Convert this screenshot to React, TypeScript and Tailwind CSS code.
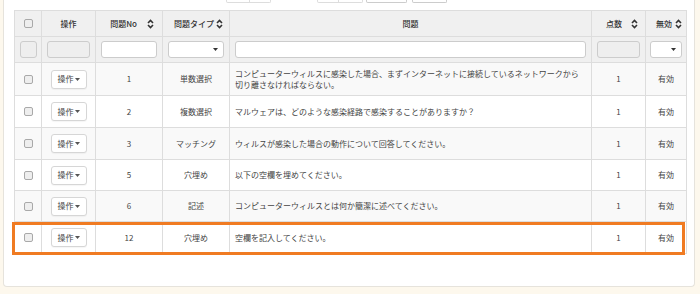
import React from "react";

const SortIcon = () => (
  <svg width="7" height="10" viewBox="0 0 7 10" className="inline-block shrink-0">
    <path d="M1 4 L3.5 1.5 L6 4" fill="none" stroke="#333" strokeWidth="1.6" />
    <path d="M1 6 L3.5 8.5 L6 6" fill="none" stroke="#333" strokeWidth="1.6" />
  </svg>
);

const Caret = () => (
  <svg width="5" height="3" viewBox="0 0 5 3" className="inline-block ml-[1px]">
    <path d="M0 0 L5 0 L2.5 3 Z" fill="#555" />
  </svg>
);

const Check = () => (
  <div className="mx-auto w-[9px] h-[9px] rounded-[2px] border border-[#a9a9a9] bg-[#eeeeee]" />
);

const OpBtn = () => (
  <div className="mx-auto flex items-center justify-center w-[36px] h-[19px] rounded-[3px] border border-[#d6d6d6] bg-white text-[8px] text-[#444] shadow-[0_1px_1px_rgba(0,0,0,0.04)]">
    操作
    <Caret />
  </div>
);

type Row = { no: string; type: string; text: string[]; h: string };

const rows: Row[] = [
  {
    no: "1",
    type: "単数選択",
    text: [
      "コンピューターウィルスに感染した場合、まずインターネットに接続しているネットワークから",
      "切り離さなければならない。",
    ],
    h: "h-[33px]",
  },
  { no: "2", type: "複数選択", text: ["マルウェアは、どのような感染経路で感染することがありますか？"], h: "h-[32px]" },
  { no: "3", type: "マッチング", text: ["ウィルスが感染した場合の動作について回答してください。"], h: "h-[32px]" },
  { no: "5", type: "穴埋め", text: ["以下の空欄を埋めてください。"], h: "h-[31px]" },
  { no: "6", type: "記述", text: ["コンピューターウィルスとは何か簡潔に述べてください。"], h: "h-[31px]" },
  { no: "12", type: "穴埋め", text: ["空欄を記入してください。"], h: "h-[32px]" },
];

const td = "border border-[#dddddd] p-0 align-middle";

export default function App() {
  return (
    <div
      className="w-[700px] h-[294px] bg-[#fdf8ed] overflow-hidden"
      style={{ fontFamily: '"Noto Sans CJK JP", "Noto Sans", sans-serif' }}
    >
      <div className="ml-[3px] mr-[5px] h-[287px] bg-white border-x border-b border-[#e6e3dc] rounded-b-[4px] px-[10px]">
        {/* partially visible toolbar buttons */}
        <div className="flex h-[3px] pl-[212px]">
          <div className="w-[24px] h-[3px] border-x border-b border-[#dddddd] rounded-bl-[2px]" />
          <div className="w-[21px] h-[3px] border-r border-b border-[#dddddd] rounded-br-[2px]" />
          <div className="w-[46px]" />
          <div className="w-[22px] h-[3px] border-x border-b border-[#dddddd] rounded-bl-[2px]" />
          <div className="w-[24px] h-[3px] border-r border-b border-[#dddddd] rounded-br-[2px]" />
          <div className="w-[3px]" />
          <div className="w-[41px] h-[3px] border-x border-b border-[#cccccc] rounded-b-[2px]" />
          <div className="w-[5px]" />
          <div className="w-[35px] h-[3px] border-x border-b border-[#cccccc] rounded-b-[2px]" />
        </div>
        <div className="relative mt-[7px]">
          <table className="w-[672px] border-collapse table-fixed text-[8px] text-[#444]">
            <colgroup>
              <col className="w-[27px]" />
              <col className="w-[54px]" />
              <col className="w-[67px]" />
              <col className="w-[67px]" />
              <col className="w-[362px]" />
              <col className="w-[54px]" />
              <col className="w-[41px]" />
            </colgroup>
            <thead>
              <tr className="h-[26px] bg-[#f0f0f0] text-[#333]">
                <th className={td + " font-medium"}>
                  <Check />
                </th>
                <th className={td + " font-medium"}>操作</th>
                <th className={td + " font-medium"}>
                  <div className="flex items-center justify-end pr-[8px] gap-[10px]">
                    <span>問題No</span>
                    <SortIcon />
                  </div>
                </th>
                <th className={td + " font-medium"}>
                  <div className="flex items-center justify-end pr-[6px] gap-[2px]">
                    <span>問題タイプ</span>
                    <SortIcon />
                  </div>
                </th>
                <th className={td + " font-medium"}>問題</th>
                <th className={td + " font-medium"}>
                  <div className="flex items-center justify-end pr-[7px] gap-[9px]">
                    <span>点数</span>
                    <SortIcon />
                  </div>
                </th>
                <th className={td + " font-medium"}>
                  <div className="flex items-center justify-end pr-[4px] gap-[3px]">
                    <span>無効</span>
                    <SortIcon />
                  </div>
                </th>
              </tr>
              <tr className="h-[26px] bg-[#f0f0f0]">
                <th className={td}>
                  <div className="mx-auto w-[17px] h-[17px] rounded-[3px] border border-[#cccccc] bg-[#eeeeee]" />
                </th>
                <th className={td + " px-[5px]"}>
                  <div className="h-[17px] rounded-[3px] border border-[#cccccc] bg-[#eeeeee]" />
                </th>
                <th className={td + " px-[5px]"}>
                  <div className="h-[17px] rounded-[3px] border border-[#cccccc] bg-white" />
                </th>
                <th className={td + " px-[5px]"}>
                  <div className="h-[17px] rounded-[3px] border border-[#cccccc] bg-white flex items-center justify-end pr-[5px]">
                    <svg width="5" height="3" viewBox="0 0 5 3">
                      <path d="M0 0 L5 0 L2.5 3 Z" fill="#333" />
                    </svg>
                  </div>
                </th>
                <th className={td + " px-[5px]"}>
                  <div className="h-[17px] rounded-[3px] border border-[#cccccc] bg-white" />
                </th>
                <th className={td + " px-[5px]"}>
                  <div className="h-[17px] rounded-[3px] border border-[#cccccc] bg-[#eeeeee]" />
                </th>
                <th className={td + " px-[4px]"}>
                  <div className="h-[17px] rounded-[3px] border border-[#cccccc] bg-white flex items-center justify-end pr-[5px]">
                    <svg width="5" height="3" viewBox="0 0 5 3">
                      <path d="M0 0 L5 0 L2.5 3 Z" fill="#333" />
                    </svg>
                  </div>
                </th>
              </tr>
            </thead>
            <tbody>
              {rows.map((r, i) => (
                <tr key={r.no} className={`${r.h} ${i % 2 === 0 ? "bg-[#f9f9f9]" : "bg-white"}`}>
                  <td className={td}>
                    <Check />
                  </td>
                  <td className={td}>
                    <OpBtn />
                  </td>
                  <td className={td + " text-center"}>{r.no}</td>
                  <td className={td + " text-center"}>{r.type}</td>
                  <td className={td + " px-[5px] leading-[11.5px]"}>
                    {r.text.map((t) => (
                      <div key={t} className="whitespace-nowrap">
                        {t}
                      </div>
                    ))}
                  </td>
                  <td className={td + " text-center"}>1</td>
                  <td className={td + " text-center"}>有効</td>
                </tr>
              ))}
            </tbody>
          </table>
          <div className="absolute left-[-2px] right-[-1px] bottom-[-1px] h-[33px] border-[3px] border-[#f07b22] pointer-events-none" />
        </div>
      </div>
    </div>
  );
}
